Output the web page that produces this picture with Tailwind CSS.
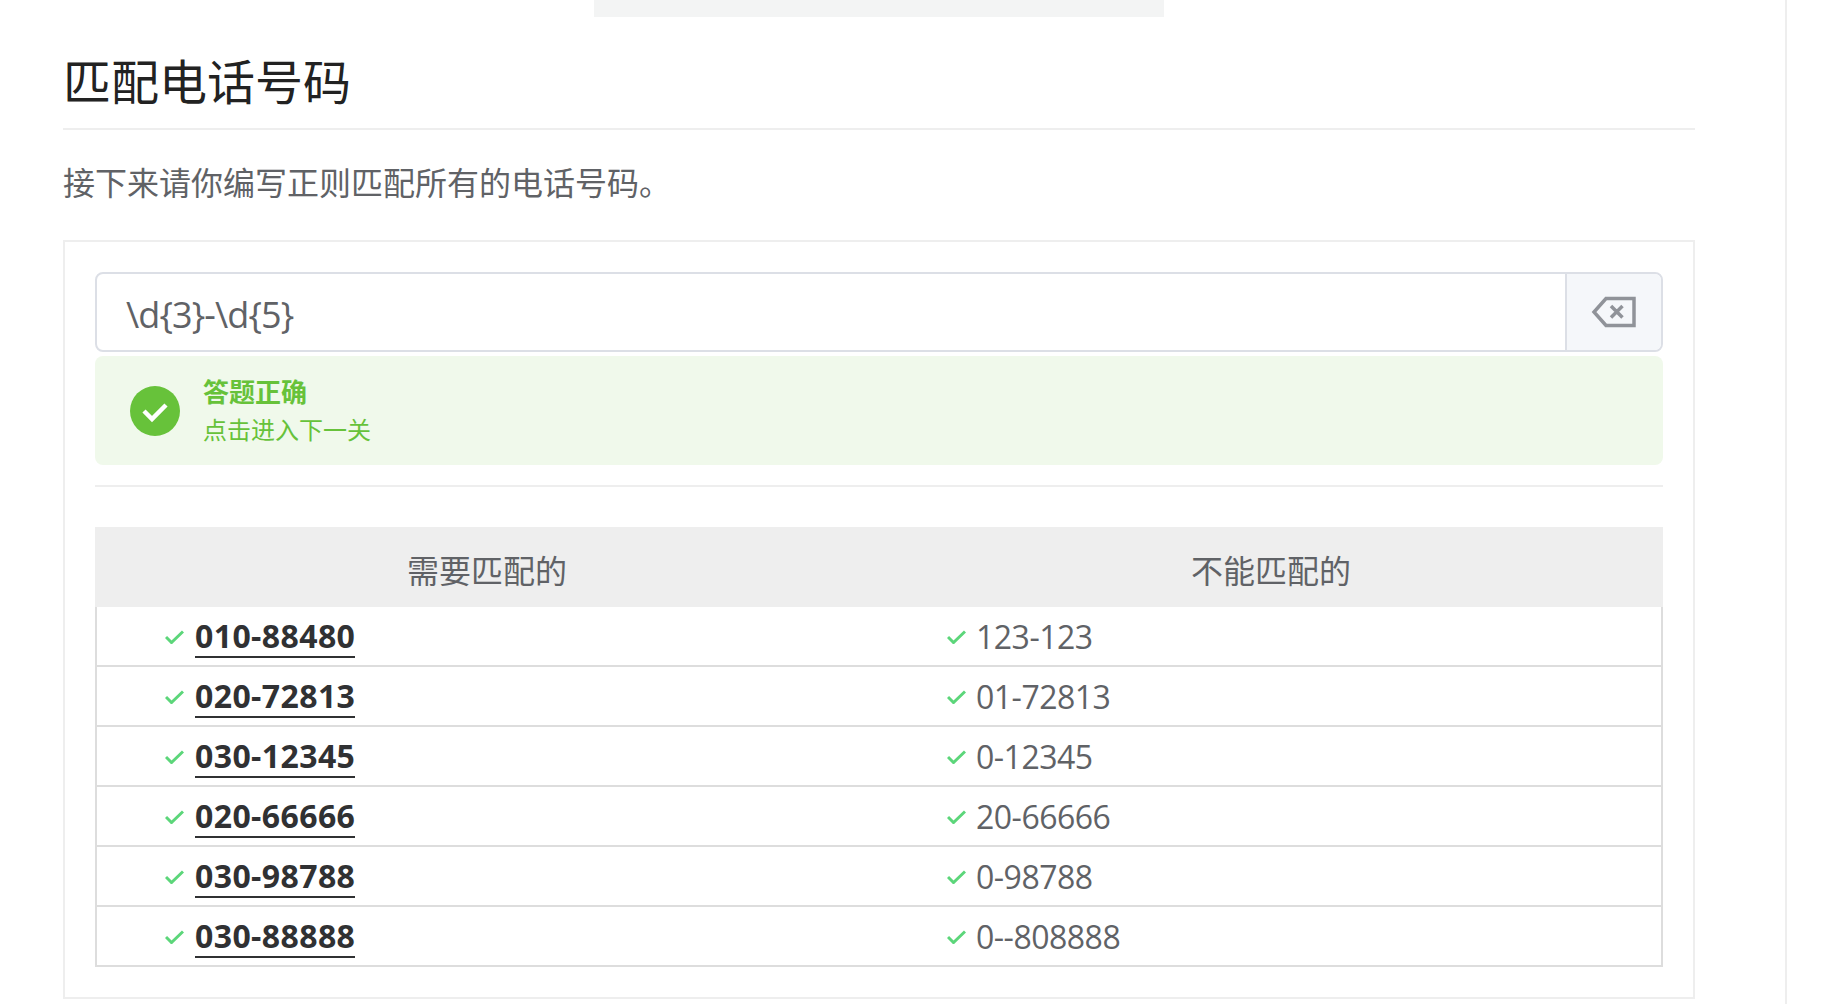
<!DOCTYPE html>
<html lang="zh-CN">
<head>
    <meta charset="UTF-8">
    <meta name="viewport" content="width=device-width, initial-scale=1.0">
    <title>匹配电话号码</title>
    <script src="https://cdn.jsdelivr.net/npm/@tailwindcss/browser@4"></script>
</head>
<body class="bg-white h-[1004px] overflow-hidden font-['Open_Sans','Noto_Sans_CJK_SC',sans-serif] text-[#606266]">
    <main class="w-[1787px] h-[1004px] border-r-2 border-[#eeeeee] pl-[63px] overflow-hidden">
        <div class="w-[1632px]">
            <div class="ml-[531px] w-[570px] h-[17px] bg-[#f3f4f4]"></div>

            <h1 class="h-[113px] pt-[33px] leading-[64px] text-[48px] font-normal text-[#222222] border-b-2 border-[#eeeeee]">匹配电话号码</h1>
            <p class="h-[110px] pt-[29px] leading-[48px] text-[32px]">接下来请你编写正则匹配所有的电话号码。</p>

            <section class="border-2 border-[#eeeeee] px-[30px] pt-[30px] h-[759px]">
                <div class="flex h-[80px] border-2 border-[#dcdfe6] rounded-lg overflow-hidden">
                    <div class="flex-1 pl-[29px] leading-[82px] text-[36px] tracking-[-0.9px]">\d{3}-\d{5}</div>
                    <div class="w-[96px] flex items-center justify-center bg-[#f5f7fa] border-l-2 border-[#dcdfe6]">
                        <svg class="w-[45px] h-[32px] mr-[1px]" viewBox="0 0 45 32" fill="none" stroke="#909399">
                            <path stroke-width="3.5" d="M43 2.5H15L3 16l12 13.500h28z"/>
                            <path stroke-width="3.500" d="M20 10l11.500 11.500M31.500 10L20 21.500"/>
                        </svg>
                    </div>
                </div>

                <div class="mt-[4px] h-[109px] flex items-center bg-[#f0f9eb] rounded-lg pl-[35px]">
                    <svg class="w-[50px] h-[50px] shrink-0" viewBox="0 0 50 50">
                        <circle cx="25" cy="25" r="25" fill="#67c23a"/>
                        <path d="M14 25l8 8 14-14" fill="none" stroke="#ffffff" stroke-width="4.500"/>
                    </svg>
                    <div class="ml-[23px] text-[#67c23a]">
                        <div class="text-[26px] leading-[38px] font-bold">答题正确</div>
                        <div class="text-[24px] leading-[38px]">点击进入下一关</div>
                    </div>
                </div>

                <div class="mt-[20px] h-[2px] bg-[#eeeeee]"></div>

                <div class="mt-[40px] text-[32px]">
                    <div class="grid grid-cols-2 h-[80px] bg-[#eeeeee] text-center leading-[88px]">
                        <div>需要匹配的</div>
                        <div>不能匹配的</div>
                    </div>
                    <div class="border-x-2 border-[#dddddd]">
                        <div class="grid grid-cols-2 h-[60px] items-center pt-[2px] border-b-2 border-[#dddddd]">
                            <div class="flex items-center pl-[68px]"><svg class="w-[19px] h-[14px] mr-[11px]" viewBox="0 0 19 14" fill="none" stroke="#5cd67a" stroke-width="3"><path d="M1 7l5.500 5.500L18 1.500"/></svg><span class="font-bold text-[#303133] tracking-[0.4px] border-b-2 border-[#303133] leading-[40px]">010-88480</span></div>
                            <div class="flex items-center pl-[68px]"><svg class="w-[19px] h-[14px] mr-[10px]" viewBox="0 0 19 14" fill="none" stroke="#5cd67a" stroke-width="3"><path d="M1 7l5.500 5.500L18 1.500"/></svg><span class="tracking-[-0.5px]">123-123</span></div>
                        </div>
                        <div class="grid grid-cols-2 h-[60px] items-center pt-[2px] border-b-2 border-[#dddddd]">
                            <div class="flex items-center pl-[68px]"><svg class="w-[19px] h-[14px] mr-[11px]" viewBox="0 0 19 14" fill="none" stroke="#5cd67a" stroke-width="3"><path d="M1 7l5.500 5.500L18 1.500"/></svg><span class="font-bold text-[#303133] tracking-[0.4px] border-b-2 border-[#303133] leading-[40px]">020-72813</span></div>
                            <div class="flex items-center pl-[68px]"><svg class="w-[19px] h-[14px] mr-[10px]" viewBox="0 0 19 14" fill="none" stroke="#5cd67a" stroke-width="3"><path d="M1 7l5.500 5.500L18 1.500"/></svg><span class="tracking-[-0.5px]">01-72813</span></div>
                        </div>
                        <div class="grid grid-cols-2 h-[60px] items-center pt-[2px] border-b-2 border-[#dddddd]">
                            <div class="flex items-center pl-[68px]"><svg class="w-[19px] h-[14px] mr-[11px]" viewBox="0 0 19 14" fill="none" stroke="#5cd67a" stroke-width="3"><path d="M1 7l5.500 5.500L18 1.500"/></svg><span class="font-bold text-[#303133] tracking-[0.4px] border-b-2 border-[#303133] leading-[40px]">030-12345</span></div>
                            <div class="flex items-center pl-[68px]"><svg class="w-[19px] h-[14px] mr-[10px]" viewBox="0 0 19 14" fill="none" stroke="#5cd67a" stroke-width="3"><path d="M1 7l5.500 5.500L18 1.500"/></svg><span class="tracking-[-0.5px]">0-12345</span></div>
                        </div>
                        <div class="grid grid-cols-2 h-[60px] items-center pt-[2px] border-b-2 border-[#dddddd]">
                            <div class="flex items-center pl-[68px]"><svg class="w-[19px] h-[14px] mr-[11px]" viewBox="0 0 19 14" fill="none" stroke="#5cd67a" stroke-width="3"><path d="M1 7l5.500 5.500L18 1.500"/></svg><span class="font-bold text-[#303133] tracking-[0.4px] border-b-2 border-[#303133] leading-[40px]">020-66666</span></div>
                            <div class="flex items-center pl-[68px]"><svg class="w-[19px] h-[14px] mr-[10px]" viewBox="0 0 19 14" fill="none" stroke="#5cd67a" stroke-width="3"><path d="M1 7l5.500 5.500L18 1.500"/></svg><span class="tracking-[-0.5px]">20-66666</span></div>
                        </div>
                        <div class="grid grid-cols-2 h-[60px] items-center pt-[2px] border-b-2 border-[#dddddd]">
                            <div class="flex items-center pl-[68px]"><svg class="w-[19px] h-[14px] mr-[11px]" viewBox="0 0 19 14" fill="none" stroke="#5cd67a" stroke-width="3"><path d="M1 7l5.500 5.500L18 1.500"/></svg><span class="font-bold text-[#303133] tracking-[0.4px] border-b-2 border-[#303133] leading-[40px]">030-98788</span></div>
                            <div class="flex items-center pl-[68px]"><svg class="w-[19px] h-[14px] mr-[10px]" viewBox="0 0 19 14" fill="none" stroke="#5cd67a" stroke-width="3"><path d="M1 7l5.500 5.500L18 1.500"/></svg><span class="tracking-[-0.5px]">0-98788</span></div>
                        </div>
                        <div class="grid grid-cols-2 h-[60px] items-center pt-[2px] border-b-2 border-[#dddddd]">
                            <div class="flex items-center pl-[68px]"><svg class="w-[19px] h-[14px] mr-[11px]" viewBox="0 0 19 14" fill="none" stroke="#5cd67a" stroke-width="3"><path d="M1 7l5.500 5.500L18 1.500"/></svg><span class="font-bold text-[#303133] tracking-[0.4px] border-b-2 border-[#303133] leading-[40px]">030-88888</span></div>
                            <div class="flex items-center pl-[68px]"><svg class="w-[19px] h-[14px] mr-[10px]" viewBox="0 0 19 14" fill="none" stroke="#5cd67a" stroke-width="3"><path d="M1 7l5.500 5.500L18 1.500"/></svg><span class="tracking-[-0.5px]">0--808888</span></div>
                        </div>
                    </div>
                </div>
            </section>
        </div>
    </main>
</body>
</html>
